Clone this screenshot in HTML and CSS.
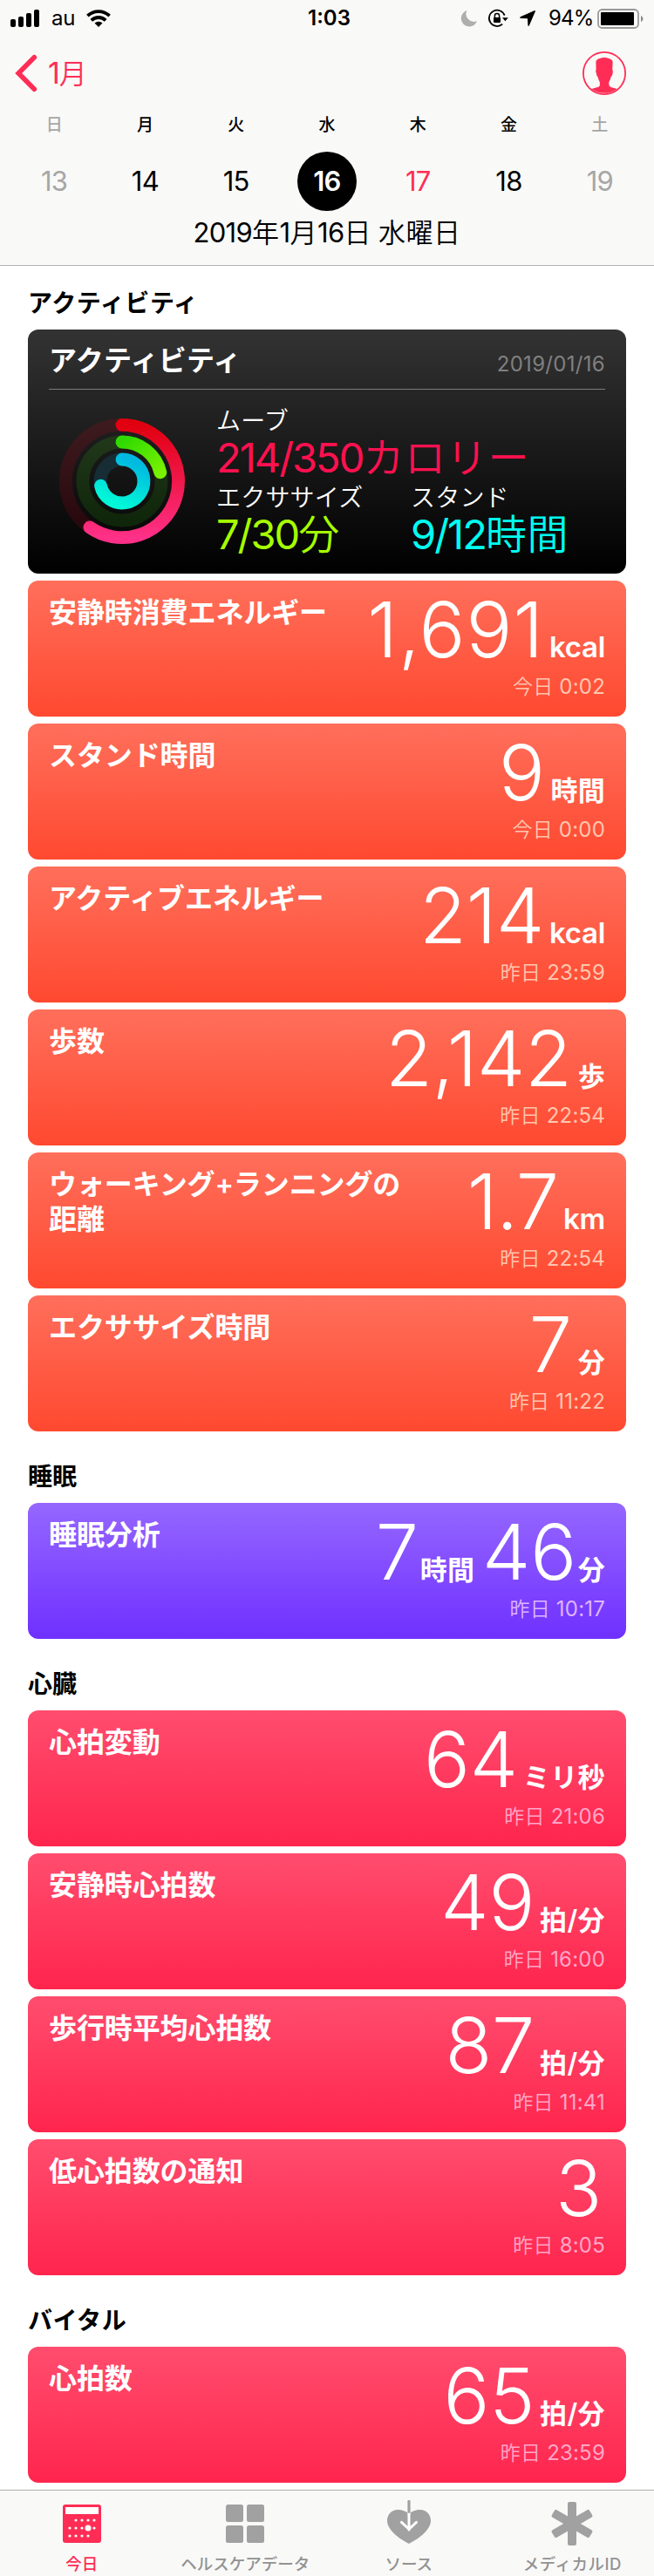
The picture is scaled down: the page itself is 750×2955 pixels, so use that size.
FILE: index.html
```html
<!DOCTYPE html>
<html lang="ja">
<head>
<meta charset="utf-8">
<title>ヘルスケア</title>
<link rel="stylesheet" href="styles.css">
</head>
<body>
<div class="screen">
<header class="top">
  <div class="status">
    <div class="status-left">
      <svg width="33" height="20" viewBox="0 0 33 20"><rect x="0" y="11" width="6" height="9" rx="2"/><rect x="9" y="8" width="6" height="12" rx="2"/><rect x="18" y="4" width="6" height="16" rx="2"/><rect x="27" y="0" width="6" height="20" rx="2"/></svg>
      <span class="carrier">au</span>
      <svg class="wifi" width="28" height="20" viewBox="0 0 28 20"><g fill="none" stroke="#000" stroke-width="3.8"><path d="M1.4 7.2a18 18 0 0 1 25.2 0"/><path d="M5.8 12.4a11.6 11.6 0 0 1 16.4 0"/></g><path d="M14 20l-4.5-4.4a6.4 6.4 0 0 1 9 0z"/></svg>
    </div>
    <div class="clock">1:03</div>
    <div class="status-right">
      <svg class="moon" width="18" height="18" viewBox="0 0 18 18"><path d="M6.5 0a9.4 9.4 0 1 0 11.5 12.3A9 9 0 0 1 6.5 0z" fill="#aeaeae"/></svg>
      <svg class="lock" width="23" height="20" viewBox="0 0 23 20"><g fill="none" stroke="#000"><path d="M18.7 6.6A9.2 9.2 0 1 0 16.2 16.7" stroke-width="1.7"/><path d="M7.4 10V7.2a2.6 2.6 0 0 1 5.2 0V10" stroke-width="1.5"/></g><rect x="6" y="9" width="8" height="6" rx="1"/><path d="M16 9.2h6.8l-3.4 4z"/></svg>
      <svg class="arrow" width="18" height="18" viewBox="0 0 18 18"><path d="M17.2 0Q18.3 0 17.8 1.2L11 17q-1 1.8-1.6 0L9 9.3.8 8.9Q-.6 8.2.8 7.2z"/></svg>
      <span class="percent">94%</span>
      <svg width="54" height="23" viewBox="0 0 54 23"><rect x="1" y="1" width="46" height="21" rx="4.5" fill="none" stroke="#999" stroke-width="1.8"/><rect x="4" y="4" width="38" height="15" rx="1"/><path d="M50 7.700q5 3.800 0 7.600z" fill="#888"/></svg>
    </div>
  </div>
  <nav class="nav">
    <div class="back">
      <svg width="24" height="42" viewBox="0 0 24 42"><path d="M21.300 2.700L3.200 21l18.100 18.300" fill="none" stroke="#ff2d55" stroke-width="5.600" stroke-linecap="round"/></svg>
      <span class="back-label">1<span class="thin">月</span></span>
    </div>
    <svg width="50" height="50" viewBox="0 0 50 50"><circle cx="25" cy="25" r="24.100" fill="none" stroke="#ff2d55" stroke-width="1.800"/><path d="M15.400 12Q15.800 8.900 20 8 25 5.900 30 8q4.300 1 4.600 4l-.3 9q1.200 1.800-.3 6.500-.8 1.300-1.400 1.800-.5 3.400-2.300 6v3q.3 2.600 3 3l6.400 1.600A24.500 24.500 0 0 1 10.300 43L16.500 41.300q3.200-.5 3.400-3v-3q-1.800-2.600-2.300-6-1.600-1.300-1.700-4-1.400-3-.3-4.300z" fill="#ff2d55"/></svg>
  </nav>
  <div class="week names"><span class="off">日</span><span>月</span><span>火</span><span>水</span><span>木</span><span>金</span><span class="off">土</span></div>
  <div class="week days"><span class="off">13</span><span>14</span><span>15</span><span class="selected">16</span><span class="today">17</span><span>18</span><span class="off">19</span></div>
  <div class="date">2019<i>年</i>1<i>月</i>16<i>日</i> <i>水曜日</i></div>
</header>

<main class="list">
  <h2 class="kana">アクティビティ</h2>
  <section class="activity">
    <div class="activity-head"><h3>アクティビティ</h3><time>2019/01/16</time></div>
    <div class="activity-body">
      <svg class="rings" width="144" height="144" viewBox="0 0 144 144">
        <defs>
          <linearGradient id="move" x1="0" y1="0" x2="0" y2="1"><stop offset="0" stop-color="#e1000f"/><stop offset="1" stop-color="#ff3088"/></linearGradient>
          <linearGradient id="exercise" x1="0" y1="0" x2="1" y2="1"><stop offset="0" stop-color="#30da00"/><stop offset="1" stop-color="#78f200"/></linearGradient>
          <linearGradient id="stand" x1=".7" y1="0" x2=".3" y2="1"><stop offset="0" stop-color="#00b8e0"/><stop offset="1" stop-color="#00f8d8"/></linearGradient>
          <linearGradient id="moveTrack" x1="0" y1="0" x2="0" y2="1"><stop offset="0" stop-color="#3d1a1e"/><stop offset="1" stop-color="#26060b"/></linearGradient>
          <linearGradient id="exerciseTrack" x1="0" y1="0" x2="0" y2="1"><stop offset="0" stop-color="#20371a"/><stop offset="1" stop-color="#10260a"/></linearGradient>
        </defs>
        <g fill="none" stroke-width="14.800">
          <circle cx="72" cy="72" r="64.600" stroke="url(#moveTrack)"/>
          <circle cx="72" cy="72" r="45" stroke="url(#exerciseTrack)"/>
          <circle cx="72" cy="72" r="25" stroke="#162d35"/>
          <g stroke-linecap="round">
            <path d="M72 7.400A64.600 64.600 0 1 1 34.900 124.900" stroke="url(#move)"/>
            <path d="M72 27A45 45 0 0 1 115.800 61.900" stroke="url(#exercise)"/>
            <path d="M72 47A25 25 0 1 1 47.500 77.200" stroke="url(#stand)"/>
          </g>
        </g>
      </svg>
      <div class="goals">
        <div class="goal wide move"><span class="goal-name">ムーブ</span><span class="goal-value">214/350<i>カロリー</i></span></div>
        <div class="goal exercise"><span class="goal-name">エクササイズ</span><span class="goal-value">7/30<i>分</i></span></div>
        <div class="goal stand"><span class="goal-name">スタンド</span><span class="goal-value">9/12<i>時間</i></span></div>
      </div>
    </div>
  </section>
  <section class="card orange"><h3>安静時消費エネルギー</h3><div class="reading"><p><b class="loose">1,691</b><em>kcal</em></p><time><i>今日</i> 0:02</time></div></section>
  <section class="card orange"><h3>スタンド時間</h3><div class="reading"><p><b>9</b><em class="cjk">時間</em></p><time><i>今日</i> 0:00</time></div></section>
  <section class="card orange"><h3>アクティブエネルギー</h3><div class="reading"><p><b>214</b><em>kcal</em></p><time><i>昨日</i> 23:59</time></div></section>
  <section class="card orange"><h3>歩数</h3><div class="reading"><p><b>2,142</b><em class="cjk">歩</em></p><time><i>昨日</i> 22:54</time></div></section>
  <section class="card orange"><h3>ウォーキング+ランニングの<br>距離</h3><div class="reading"><p><b class="tight">1.7</b><em>km</em></p><time><i>昨日</i> 22:54</time></div></section>
  <section class="card orange"><h3>エクササイズ時間</h3><div class="reading"><p><b>7</b><em class="cjk">分</em></p><time><i>昨日</i> 11:22</time></div></section>

  <h2>睡眠</h2>
  <section class="card purple"><h3>睡眠分析</h3><div class="reading"><p><b>7</b><em class="cjk hours">時間</em><b>46</b><em class="cjk minutes">分</em></p><time><i>昨日</i> 10:17</time></div></section>

  <h2>心臓</h2>
  <section class="card pink"><h3>心拍変動</h3><div class="reading"><p><b>64</b><em class="cjk wide-unit">ミリ秒</em></p><time><i>昨日</i> 21:06</time></div></section>
  <section class="card pink"><h3>安静時心拍数</h3><div class="reading"><p><b>49</b><em class="cjk wide-unit">拍/分</em></p><time><i>昨日</i> 16:00</time></div></section>
  <section class="card pink"><h3>歩行時平均心拍数</h3><div class="reading"><p><b>87</b><em class="cjk wide-unit">拍/分</em></p><time><i>昨日</i> 11:41</time></div></section>
  <section class="card pink"><h3>低心拍数の通知</h3><div class="reading"><p><b class="bare">3</b></p><time><i>昨日</i> 8:05</time></div></section>

  <h2 class="kana">バイタル</h2>
  <section class="card pink"><h3>心拍数</h3><div class="reading"><p><b>65</b><em class="cjk wide-unit">拍/分</em></p><time><i>昨日</i> 23:59</time></div></section>
</main>

<footer class="tabs">
  <div class="tab active">
    <svg width="50" height="50" viewBox="0 0 50 50"><rect x="3" y="5" width="44" height="44" rx="3" fill="#ff2d55"/><path d="M6 8h38v8H6z" fill="#fff"/><g fill="#fff"><circle cx="18" cy="23" r="1.600"/><circle cx="25" cy="23" r="1.600"/><circle cx="32" cy="23" r="1.600"/><circle cx="39" cy="23" r="1.600"/><circle cx="11" cy="32" r="1.600"/><circle cx="18" cy="32" r="1.600"/><circle cx="25" cy="32" r="1.600"/><circle cx="32" cy="32" r="3.500"/><circle cx="39" cy="32" r="1.600"/><circle cx="11" cy="41" r="1.600"/><circle cx="18" cy="41" r="1.600"/><circle cx="25" cy="41" r="1.600"/><circle cx="32" cy="41" r="1.600"/></g></svg>
    <span>今日</span>
  </div>
  <div class="tab">
    <svg width="50" height="50" viewBox="0 0 50 50" fill="#a1a1a1"><rect x="3" y="5" width="20" height="20" rx="2.500"/><rect x="27" y="5" width="20" height="20" rx="2.500"/><rect x="3" y="29" width="20" height="20" rx="2.500"/><rect x="27" y="29" width="20" height="20" rx="2.500"/></svg>
    <span>ヘルスケアデータ</span>
  </div>
  <div class="tab">
    <svg width="50" height="50" viewBox="0 0 50 50"><path d="M25 50C16 45.500 0 35 0 23.500 0 16 5.500 11 12 11c5 0 10 1.500 13 5 3-3.500 8-5 13-5 6.500 0 12 5 12 12.500C50 35 34 45.500 25 50z" fill="#a1a1a1"/><path d="M23 10h4v6.500h-4z" fill="#f9f9f8"/><rect x="23.400" y="0" width="3.200" height="16" rx="1.200" fill="#a1a1a1"/><path d="M25 16v18M16.500 25.300l8.500 8 8.500-8" fill="none" stroke="#fff" stroke-width="3" stroke-linecap="round"/></svg>
    <span>ソース</span>
  </div>
  <div class="tab">
    <svg width="50" height="50" viewBox="0 0 50 50" fill="#a1a1a1"><rect x="20" y="2" width="10" height="50" rx="2"/><rect x="20" y="2" width="10" height="50" rx="2" transform="rotate(60 25 27)"/><rect x="20" y="2" width="10" height="50" rx="2" transform="rotate(120 25 27)"/></svg>
    <span class="medical">メディカルID</span>
  </div>
</footer>
</div>
</body>
</html>
```
FILE: styles.css
```css
* { box-sizing: border-box; margin: 0; padding: 0; }
body { font-family: Inter, "Noto Sans CJK JP", sans-serif; background: #fff; color: #000; }
svg { display: block; flex: none; overflow: visible; }
i, em { font-style: normal; }
i, .thin { font-weight: 350; }
.screen { width: 750px; height: 2955px; display: flex; flex-direction: column; overflow: hidden; }

.top { height: 305px; background: #f9f9f8; border-bottom: 1px solid #b2b2b2; flex: none; }
.status { height: 40px; display: grid; grid-template-columns: 1fr auto 1fr; align-items: center; padding: 1px 11px 0 12px; font-size: 24px; line-height: 40px; }
.status-left, .status-right { display: flex; align-items: center; }
.status-right { justify-content: flex-end; }
.carrier { margin-left: 14px; width: 40px; letter-spacing: -.3px; }
.clock { font-weight: 600; padding-left: 4px; }
.moon { margin-right: 13px; }
.lock { margin-right: 13px; }
.arrow { margin-right: 15px; }
.percent { width: 56px; letter-spacing: -.8px; white-space: nowrap; }
.nav { height: 88px; display: flex; align-items: center; justify-content: space-between; padding: 0 32px 0 18px; }
.back { display: flex; align-items: center; gap: 13px; color: #ff2d55; font-size: 34px; line-height: 40px; }
.back-label { letter-spacing: -1px; }
.back-label .thin { font-size: 32px; }
.week { display: grid; grid-template-columns: repeat(7, 1fr); padding: 0 10px; justify-items: center; }
.names { height: 32px; line-height: 32px; font-size: 19px; font-weight: 500; }
.days { height: 95px; align-items: center; font-size: 31px; letter-spacing: -.7px; }
.off { color: #a6a6a6; }
.today { color: #ff2d55; }
.selected { width: 68px; height: 68px; line-height: 68px; border-radius: 50%; background: #000; color: #fff; text-align: center; font-weight: 600; }
.date { height: 40px; margin-top: -8px; line-height: 40px; font-size: 31px; text-align: center; letter-spacing: -.7px; }
.date i { letter-spacing: .5px; }

.list { flex: 1; padding: 0 32px; }
h2 { height: 74px; padding-top: 24px; line-height: 40px; font-size: 28px; font-weight: 600; }
h2:first-child { height: 73px; padding-top: 23px; }
.kana { letter-spacing: .6px; }
h3 { padding-top: 1px; font-size: 32px; line-height: 40px; font-weight: 600; letter-spacing: -.1px; white-space: nowrap; }

.activity { height: 280px; margin-bottom: 8px; border-radius: 12px; padding: 0 24px; background: linear-gradient(#333, #000); color: #fff; }
.activity-head { height: 69px; display: flex; justify-content: space-between; border-bottom: 1px solid #7c7c7c; }
.activity-head h3 { padding-top: 16px; letter-spacing: .3px; }
.activity-head time { padding-top: 20px; line-height: 40px; font-size: 24px; letter-spacing: .3px; color: #808080; }
.activity-body { display: flex; padding-left: 12px; }
.rings { margin-top: 33px; }
.goals { margin: 18px 0 0 36px; display: grid; grid-template-columns: 223px 1fr; align-content: start; }
.goal { display: flex; flex-direction: column; height: 88px; }
.wide { grid-column: 1 / 3; }
.goal-name { font-size: 28px; line-height: 36px; font-weight: 350; letter-spacing: .2px; }
.goal-value { font-size: 47px; line-height: 48px; letter-spacing: -2px; white-space: nowrap; }
.goal-value i { letter-spacing: .7px; }
.move .goal-value { color: #ff1150; }
.exercise .goal-value { color: #a6ff00; }
.stand .goal-value { color: #00fff0; }

.card { height: 156px; margin-bottom: 8px; border-radius: 12px; padding: 16px 24px 0; display: flex; justify-content: space-between; color: #fff; }
.orange { background: linear-gradient(#ff6f5b, #ff4930); --time: #ffc6b0; }
.purple { background: linear-gradient(#9567ff, #6f30ff); --time: #deb4ff; }
.pink { background: linear-gradient(#ff4d6e, #ff254d); --time: #ffa6c8; }
.reading { display: flex; flex-direction: column; align-items: flex-end; }
.reading p { height: 86px; display: flex; align-items: baseline; line-height: 80px; white-space: nowrap; }
.reading b { font-size: 88px; font-weight: 300; letter-spacing: -.3px; }
.reading b.loose { letter-spacing: 1px; }
.reading b.tight { letter-spacing: -1px; }
.reading b.bare { margin-right: 4px; }
.reading em { margin-left: 6px; font-size: 33px; font-weight: 600; letter-spacing: -.3px; }
.reading em.cjk { margin-left: 7px; font-size: 31px; letter-spacing: .2px; }
.reading em.wide-unit { margin-left: 6px; letter-spacing: .4px; }
.reading em.hours { margin-left: 2px; margin-right: 9px; }
.reading em.minutes { margin-left: 2px; }
.reading time { font-size: 24px; line-height: 40px; letter-spacing: .2px; color: var(--time); white-space: nowrap; }
.reading time i { font-size: 23px; }

.tabs { height: 100px; flex: none; display: grid; grid-template-columns: repeat(4, 1fr); border-top: 1px solid #b0b0ac; background: #f9f9f8; }
.tab { display: flex; flex-direction: column; align-items: center; padding-top: 11px; color: #929292; }
.tab span { margin-top: 7px; line-height: 32px; font-size: 18.500px; font-weight: 500; white-space: nowrap; }
.tab .medical { letter-spacing: .5px; }
.active { color: #ff2d55; }
```
